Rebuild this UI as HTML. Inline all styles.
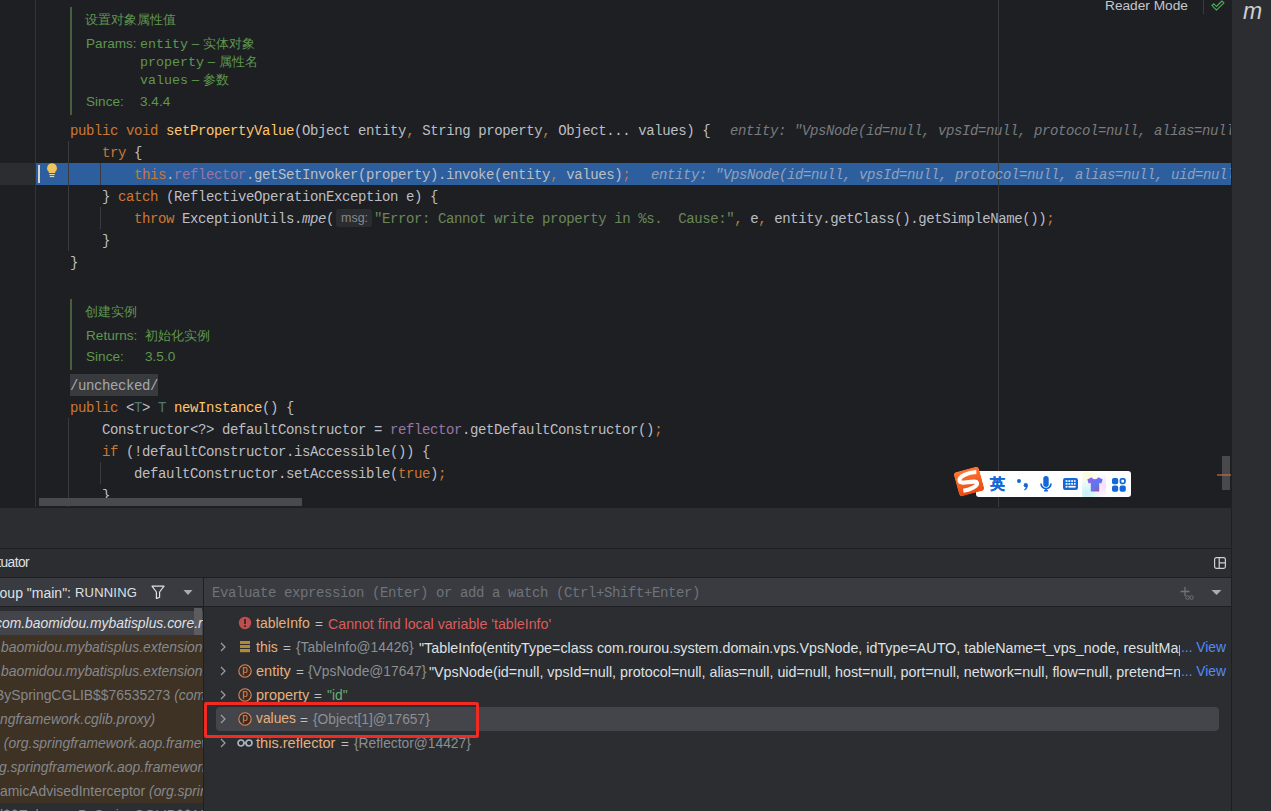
<!DOCTYPE html>
<html><head><meta charset="utf-8">
<style>
*{margin:0;padding:0;box-sizing:border-box}
html,body{width:1271px;height:811px;overflow:hidden;background:#2B2D30}
body{position:relative;font-family:"Liberation Sans",sans-serif}
.a{position:absolute}
#ed{left:0;top:0;width:1231px;height:508px;background:#1E1F22;overflow:hidden}
.ln{position:absolute;left:70px;height:22px;line-height:22px;white-space:pre;font-family:"Liberation Mono",monospace;font-size:14px;letter-spacing:-0.4px;color:#BCBEC4}
.k{color:#CC7832}.m{color:#FFC66D}.f{color:#9876AA}.s{color:#6A8759}.tp{color:#507874}.it{font-style:italic}
.hint{position:absolute;height:22px;line-height:22px;white-space:pre;font-family:"Liberation Mono",monospace;font-size:14px;letter-spacing:-0.4px;font-style:italic;color:#787B80}
.doc{position:absolute;white-space:pre;color:#5F9650;font-size:13.6px;line-height:18px;font-family:"Liberation Sans",sans-serif}
.docm{font-family:"Liberation Mono",monospace;font-size:13.333px}
.cj{font-size:12.6px}
.ui{position:absolute;white-space:pre;font-size:13.6px;line-height:24px;font-family:"Liberation Sans",sans-serif}
.vn{color:#E5B07F;font-size:13.8px}.eq{color:#BEC1C6;font-size:13.4px}.vt{color:#8C8F94;font-size:13.8px}.vs{color:#DFE1E5;font-size:14.3px;overflow:hidden}
</style></head><body>
<div id="ed" class="a">
  <!-- gutter -->
  <div class="a" style="left:35px;top:0;width:1px;height:507px;background:#313438"></div>
  <div class="a" style="left:0;top:163px;width:35px;height:22px;background:#2B2D30"></div>
  <!-- exec line -->
  <div class="a" style="left:36px;top:163px;width:1196px;height:22px;background:#2D5F9E"></div>
  <div class="a" style="left:38px;top:165px;width:2px;height:18px;background:#D8D4CC"></div>
  <svg class="a" style="left:46px;top:162px" width="12" height="16" viewBox="0 0 12 16">
    <path d="M6 1.2a4.9 4.9 0 0 0-3.2 8.6V11h6.4V9.8A4.9 4.9 0 0 0 6 1.2z" fill="#F2C55C"/>
    <rect x="3.3" y="12" width="5.4" height="1.1" fill="#D8D4CC"/>
    <rect x="3.8" y="14" width="4.4" height="1.1" fill="#D8D4CC"/>
  </svg>
  <!-- right margin -->
  <div class="a" style="left:998px;top:0;width:1px;height:507px;background:#393B40"></div>
  <!-- indent guides -->
  <div class="a" style="left:68px;top:141px;width:1px;height:110px;background:#393B40"></div>
  <div class="a" style="left:100px;top:163px;width:1px;height:22px;background:#393B40"></div>
  <div class="a" style="left:100px;top:207px;width:1px;height:22px;background:#393B40"></div>
  <div class="a" style="left:68px;top:418px;width:1px;height:89px;background:#393B40"></div>
  <div class="a" style="left:100px;top:462px;width:1px;height:22px;background:#393B40"></div>

  <!-- doc 1 -->
  <div class="a" style="left:70px;top:7px;width:2px;height:108px;background:#46603F"></div>
  <div class="doc" style="left:85px;top:11px"><span class="cj">设置对象属性值</span></div>
  <div class="doc" style="left:86px;top:35px">Params:</div>
  <div class="doc docm" style="left:140px;top:35px">entity<span style="font-family:'Liberation Sans'"> – <span class="cj">实体对象</span></span></div>
  <div class="doc docm" style="left:140px;top:53px">property<span style="font-family:'Liberation Sans'"> – <span class="cj">属性名</span></span></div>
  <div class="doc docm" style="left:140px;top:71px">values<span style="font-family:'Liberation Sans'"> – <span class="cj">参数</span></span></div>
  <div class="doc" style="left:86px;top:93px">Since:</div>
  <div class="doc" style="left:140px;top:93px">3.4.4</div>

  <!-- code 1 -->
  <div class="ln" style="top:120px"><span class="k">public</span> <span class="k">void</span> <span class="m">setPropertyValue</span>(Object entity<span class="k">,</span> String property<span class="k">,</span> Object... values) {</div>
  <div class="hint" style="left:730px;top:120px">entity: "VpsNode(id=null, vpsId=null, protocol=null, alias=null, uid=null</div>
  <div class="ln" style="top:142px">    <span class="k">try</span> {</div>
  <div class="ln" style="top:164px">        <span class="k">this</span>.<span class="f">reflector</span>.getSetInvoker(property).invoke(entity<span class="k">,</span> values)<span class="k">;</span></div>
  <div class="hint" style="left:651px;top:164px;color:#8FA3BF">entity: "VpsNode(id=null, vpsId=null, protocol=null, alias=null, uid=null, host=null</div>
  <div class="ln" style="top:186px">    } <span class="k">catch</span> (ReflectiveOperationException e) {</div>
  <div class="ln" style="top:208px">        <span class="k">throw</span> ExceptionUtils.<span class="it">mpe</span>(     <span class="s">"Error: Cannot write property in %s.  Cause:"</span><span class="k">,</span> e<span class="k">,</span> entity.getClass().getSimpleName())<span class="k">;</span></div>
  <div class="a" style="left:336px;top:209px;width:36px;height:18px;border-radius:3px;background:#2B2C30"></div>
  <div class="a" style="left:341px;top:209px;height:18px;line-height:18px;font-size:12.5px;color:#85888D;white-space:pre">msg:</div>
  <div class="ln" style="top:230px">    }</div>
  <div class="ln" style="top:252px">}</div>

  <!-- doc 2 -->
  <div class="a" style="left:70px;top:299px;width:2px;height:71px;background:#46603F"></div>
  <div class="doc" style="left:85px;top:303px"><span class="cj">创建实例</span></div>
  <div class="doc" style="left:86px;top:327px">Returns:</div>
  <div class="doc" style="left:145px;top:327px"><span class="cj">初始化实例</span></div>
  <div class="doc" style="left:86px;top:348px">Since:</div>
  <div class="doc" style="left:145px;top:348px">3.5.0</div>

  <!-- code 2 -->
  <div class="a" style="left:70px;top:374px;width:88px;height:22px;background:#393A3D"></div>
  <div class="ln" style="top:375px;color:#A4A9B0">/unchecked/</div>
  <div class="ln" style="top:397px"><span class="k">public</span> &lt;<span class="tp">T</span>&gt; <span class="tp">T</span> <span class="m">newInstance</span>() {</div>
  <div class="ln" style="top:419px">    Constructor&lt;?&gt; defaultConstructor = <span class="f">reflector</span>.getDefaultConstructor()<span class="k">;</span></div>
  <div class="ln" style="top:441px">    <span class="k">if</span> (!defaultConstructor.isAccessible()) {</div>
  <div class="ln" style="top:463px">        defaultConstructor.setAccessible(<span class="k">true</span>)<span class="k">;</span></div>
  <div class="ln" style="top:485px">    }</div>

  <!-- scrollbars -->
  <div class="a" style="left:39px;top:498px;width:263px;height:8px;background:#4A4A4C"></div>
  <div class="a" style="left:1222px;top:456px;width:8px;height:34px;background:#48494C"></div>
  <div class="a" style="left:1217px;top:474px;width:14px;height:2px;background:rgba(200,110,70,0.6)"></div>

  <!-- reader mode -->
  <div class="ui" style="left:1105px;top:-5px;color:#C4C7CD;line-height:22px;font-size:13.7px">Reader Mode</div>
  <div class="a" style="left:1203px;top:0;width:1px;height:14px;background:#393B40"></div>
  <svg class="a" style="left:1211px;top:0" width="14" height="12" viewBox="0 0 14 12">
    <path d="M0.9 5.4L5.4 10.2L13 2.9L10.9 1L5.4 6.5L2.9 3.8Z" fill="none" stroke="#55A85B" stroke-width="1.1" stroke-linejoin="round"/>
  </svg>
</div>

<!-- right strip -->
<div class="a" style="left:1231px;top:0;width:1px;height:811px;background:#1E1F22"></div>
<div class="a" style="left:1243px;top:-4px;font-size:23px;font-style:italic;color:#CDCFD3;line-height:30px">m</div>

<!-- IME bar -->
<div class="a" style="left:976px;top:471px;width:155px;height:26px;border-radius:3px;background:#FFFFFF"></div>
<svg class="a" style="left:956px;top:469px;transform:rotate(-15deg)" width="26" height="25" viewBox="0 0 26 25">
  <defs><linearGradient id="og" x1="0" y1="0" x2="0" y2="1"><stop offset="0" stop-color="#FF7634"/><stop offset="1" stop-color="#EA4A12"/></linearGradient></defs>
  <rect x="0" y="0" width="26" height="25" rx="3.5" fill="url(#og)"/>
  <path d="M22.5 5.2C15 3.6 4 4.5 4 9.6c0 4.2 16.3 2.6 16.3 6.4c0 3.6-9.5 4.6-15.2 4" fill="none" stroke="#FFFFFF" stroke-width="4.2"/>
</svg>
<div class="a" style="left:990px;top:474px;font-size:15px;font-weight:bold;color:#1268D6;line-height:20px;-webkit-text-stroke:0.3px #1268D6">英</div>
<svg class="a" style="left:1016px;top:477px" width="13" height="15" viewBox="0 0 13 15">
  <circle cx="3" cy="4" r="2" fill="#1268D6"/>
  <circle cx="9.8" cy="8.2" r="2.1" fill="#1268D6"/><path d="M11.8 8.4C11.6 11 10.5 12.6 8.6 13.6L8 12.8C9.2 11.9 9.8 10.8 9.9 9.5Z" fill="#1268D6"/>
</svg>
<svg class="a" style="left:1040px;top:476px" width="12" height="16" viewBox="0 0 12 16">
  <rect x="3.3" y="0" width="5.4" height="11" rx="2.7" fill="#1268D6"/>
  <path d="M1 7.6a5 5 0 0 0 10 0" fill="none" stroke="#1268D6" stroke-width="1.7"/>
  <rect x="5.2" y="12.4" width="1.6" height="1.6" fill="#1268D6"/><rect x="4" y="14" width="4" height="1.6" rx="0.5" fill="#1268D6"/>
</svg>
<svg class="a" style="left:1063px;top:478px" width="15" height="12" viewBox="0 0 15 12">
  <rect x="0" y="0" width="15" height="12" rx="2.2" fill="#1268D6"/>
  <g fill="#FFFFFF"><rect x="2.6" y="2.2" width="1.9" height="1.7"/><rect x="5.4" y="2.2" width="1.9" height="1.7"/><rect x="8.2" y="2.2" width="1.9" height="1.7"/><rect x="11" y="2.2" width="1.6" height="1.7"/>
  <rect x="2.6" y="5" width="1.9" height="1.7"/><rect x="5.4" y="5" width="1.9" height="1.7"/><rect x="8.2" y="5" width="1.9" height="1.7"/><rect x="11" y="5" width="1.6" height="1.7"/>
  <rect x="2.6" y="7.9" width="1.9" height="1.7"/><rect x="5.4" y="7.9" width="7.2" height="1.7"/></g>
</svg>
<div class="a" style="left:1082px;top:472px;width:24px;height:25px;background:radial-gradient(circle at 20% 85%,rgba(190,240,245,0.9),rgba(255,255,255,0) 55%),radial-gradient(circle at 90% 55%,rgba(248,215,250,0.9),rgba(255,255,255,0) 50%),radial-gradient(circle at 25% 15%,rgba(250,250,205,0.8),rgba(255,255,255,0) 40%)"></div>
<svg class="a" style="left:1087px;top:477px" width="16" height="15" viewBox="0 0 16 15">
  <defs><linearGradient id="sg" x1="0" y1="0" x2="1" y2="1"><stop offset="0" stop-color="#A05AF2"/><stop offset="0.55" stop-color="#5A78F0"/><stop offset="1" stop-color="#B0507A"/></linearGradient></defs>
  <path d="M4.6 0.3L0.3 2.6l1.4 4 2.1-.6v8.5h8.4V6l2.1.6 1.4-4L11.4.3C10.7 1.6 9.5 2.3 8 2.3S5.3 1.6 4.6.3z" fill="url(#sg)"/>
</svg>
<svg class="a" style="left:1112px;top:478px" width="14" height="14" viewBox="0 0 14 14">
  <g fill="#1268D6"><rect x="0" y="0" width="6.2" height="6.2" rx="1.8"/><rect x="0" y="7.6" width="6.2" height="6.2" rx="1.8"/><rect x="7.6" y="7.6" width="6.2" height="6.2" rx="1.8"/></g>
  <rect x="8.5" y="0.9" width="4.4" height="4.4" rx="1.2" fill="none" stroke="#1268D6" stroke-width="1.8"/>
</svg>

<!-- debug panel -->
<div class="a" style="left:0;top:548px;width:1231px;height:1px;background:#1E1F22"></div>
<div class="ui" style="left:-100px;width:129px;text-align:right;top:551px;color:#DFE1E5;font-size:13.8px;letter-spacing:-0.6px">tuator</div>
<svg class="a" style="left:1214px;top:557px" width="12" height="12" viewBox="0 0 12 12">
  <rect x="0.6" y="0.6" width="10.8" height="10.8" rx="1.8" fill="none" stroke="#CED0D6" stroke-width="1.2"/>
  <path d="M5.2 1v10M5.2 5.9h6" stroke="#CED0D6" stroke-width="1.2"/>
</svg>
<div class="a" style="left:0;top:577px;width:1231px;height:1px;background:#1E1F22"></div>
<div class="a" style="left:0;top:578px;width:1231px;height:28px;background:#393B40"></div>
<div class="a" style="left:0;top:606px;width:1231px;height:1px;background:#1E1F22"></div>
<div class="a" style="left:203px;top:578px;width:1px;height:233px;background:#1E1F22"></div>
<div class="ui" style="left:-100px;width:171px;text-align:right;top:581px;color:#DFE1E5;font-size:14px">oup "main":</div><div class="ui" style="left:75px;top:581px;color:#DFE1E5;font-size:13px;letter-spacing:0.2px">RUNNING</div>
<svg class="a" style="left:151px;top:585px" width="14" height="14" viewBox="0 0 14 14">
  <path d="M1 1.2h12L8.6 7v5.2L5.4 13.6V7z" fill="none" stroke="#DFE1E5" stroke-width="1.2" stroke-linejoin="round"/>
</svg>
<svg class="a" style="left:183px;top:589px" width="10" height="7" viewBox="0 0 10 7"><path d="M0.5 1h9L5 6z" fill="#A8ABB0"/></svg>
<div class="ln" style="left:212px;top:582px;color:#6F737A">Evaluate expression (Enter) or add a watch (Ctrl+Shift+Enter)</div>
<svg class="a" style="left:1180px;top:586px" width="15" height="14" viewBox="0 0 15 14">
  <path d="M5 1v9M0.5 5.5h9" stroke="#6F737A" stroke-width="1.3"/>
  <circle cx="7.5" cy="11.5" r="1.8" fill="none" stroke="#6F737A" stroke-width="1"/><circle cx="11.5" cy="11.5" r="1.8" fill="none" stroke="#6F737A" stroke-width="1"/>
</svg>
<svg class="a" style="left:1211px;top:589px" width="11" height="7" viewBox="0 0 11 7"><path d="M0.5 1h10L5.5 6z" fill="#A8ABB0"/></svg>

<!-- frames -->
<div class="a" style="left:0;top:607px;width:203px;height:204px;overflow:hidden;font-size:13.9px">
  <div class="a" style="left:0;top:4px;width:203px;height:24px;background:#43454A"></div>
  <div class="a" style="left:0;top:28px;width:203px;height:168px;background:#3D3224"></div>
  <div class="a" style="left:194px;top:1px;width:8px;height:27px;background:#5A5C60"></div>
  <div class="ui it" style="left:-5px;top:4px;color:#DFE1E5;font-size:13.9px">com.baomidou.mybatisplus.core.reflection</div>
  <div class="ui it" style="left:1px;top:28px;color:#86888C;font-size:13.9px">baomidou.mybatisplus.extension</div>
  <div class="ui it" style="left:1px;top:52px;color:#86888C;font-size:13.9px">baomidou.mybatisplus.extension</div>
  <div class="ui" style="left:-5px;top:76px;color:#86888C;font-size:13.9px">BySpringCGLIB$$76535273 <i>(com.baomidou</i></div>
  <div class="ui it" style="left:0px;top:100px;color:#86888C;font-size:13.9px">ngframework.cglib.proxy)</div>
  <div class="ui it" style="left:0px;top:124px;color:#86888C;font-size:13.9px"> (org.springframework.aop.framework</div>
  <div class="ui it" style="left:-1px;top:148px;color:#86888C;font-size:13.9px">g.springframework.aop.framework</div>
  <div class="ui" style="left:0px;top:172px;color:#86888C;font-size:13.9px">amicAdvisedInterceptor <i>(org.springframework</i></div>
  <div class="ui" style="left:0px;top:196px;color:#86888C;font-size:13.9px">l$$EnhancerBySpringCGLIB$$13a5</div>
</div>

<!-- variables -->
<div class="a" style="left:216px;top:707px;width:1003px;height:24px;border-radius:4px;background:#43454A"></div>
<svg class="a" style="left:238px;top:616px" width="14" height="14" viewBox="0 0 14 14">
  <circle cx="7" cy="7" r="6.2" fill="#BF4E4E"/><rect x="6.1" y="3" width="1.8" height="5" fill="#2B2D30"/><rect x="6.1" y="9.2" width="1.8" height="1.8" fill="#2B2D30"/>
</svg>
<div class="ui vn" style="left:256px;top:611px;font-size:14px">tableInfo</div>
<div class="ui eq" style="left:315px;top:612px">=</div>
<div class="ui" style="left:328px;top:612px;color:#DB5C5C;font-size:14.2px">Cannot find local variable 'tableInfo'</div>

<svg class="a" style="left:219px;top:642px" width="8" height="10" viewBox="0 0 8 10"><path d="M2 1l4 4-4 4" fill="none" stroke="#9DA0A8" stroke-width="1.2"/></svg>
<svg class="a" style="left:240px;top:641px" width="11" height="12" viewBox="0 0 11 12"><g fill="#B08A34"><rect x="0" y="0" width="10" height="3"/><rect x="0" y="4" width="10" height="3"/><rect x="0" y="8" width="10" height="3.2"/></g></svg>
<div class="ui vn" style="left:256px;top:635px;font-size:14px">this</div>
<div class="ui eq" style="left:283px;top:636px">=</div>
<div class="ui vt" style="left:296px;top:636px">{TableInfo@14426}</div>
<div class="ui vs" style="left:419px;top:636px;width:761px">"TableInfo(entityType=class com.rourou.system.domain.vps.VpsNode, idType=AUTO, tableName=t_vps_node, resultMap=null, keyProperty=null</div>
<div class="ui" style="left:1181px;top:636px;color:#548AF7;font-size:13.8px">... View</div>

<svg class="a" style="left:219px;top:666px" width="8" height="10" viewBox="0 0 8 10"><path d="M2 1l4 4-4 4" fill="none" stroke="#9DA0A8" stroke-width="1.2"/></svg>
<svg class="a" style="left:238px;top:664px" width="14" height="14" viewBox="0 0 14 14"><circle cx="7" cy="7" r="6.2" fill="#3D2B21" stroke="#DE8A5A" stroke-width="1.1"/><text x="7.1" y="9.3" font-size="10" text-anchor="middle" fill="#DE8A5A" font-family="Liberation Sans">p</text></svg>
<div class="ui vn" style="left:256px;top:659px;font-size:14.5px">entity</div>
<div class="ui eq" style="left:296px;top:660px">=</div>
<div class="ui vt" style="left:308px;top:660px">{VpsNode@17647}</div>
<div class="ui vs" style="left:429px;top:660px;width:751px">"VpsNode(id=null, vpsId=null, protocol=null, alias=null, uid=null, host=null, port=null, network=null, flow=null, pretend=null, status=null</div>
<div class="ui" style="left:1181px;top:660px;color:#548AF7;font-size:13.8px">... View</div>

<svg class="a" style="left:219px;top:690px" width="8" height="10" viewBox="0 0 8 10"><path d="M2 1l4 4-4 4" fill="none" stroke="#9DA0A8" stroke-width="1.2"/></svg>
<svg class="a" style="left:238px;top:688px" width="14" height="14" viewBox="0 0 14 14"><circle cx="7" cy="7" r="6.2" fill="#3D2B21" stroke="#DE8A5A" stroke-width="1.1"/><text x="7.1" y="9.3" font-size="10" text-anchor="middle" fill="#DE8A5A" font-family="Liberation Sans">p</text></svg>
<div class="ui vn" style="left:256px;top:683px;font-size:14.5px">property</div>
<div class="ui eq" style="left:314px;top:684px">=</div>
<div class="ui" style="left:327px;top:684px;color:#6AAB73;font-size:13.8px">"id"</div>

<svg class="a" style="left:219px;top:714px" width="8" height="10" viewBox="0 0 8 10"><path d="M2 1l4 4-4 4" fill="none" stroke="#9DA0A8" stroke-width="1.2"/></svg>
<svg class="a" style="left:238px;top:712px" width="14" height="14" viewBox="0 0 14 14"><circle cx="7" cy="7" r="6.2" fill="#3D2B21" stroke="#DE8A5A" stroke-width="1.1"/><text x="7.1" y="9.3" font-size="10" text-anchor="middle" fill="#DE8A5A" font-family="Liberation Sans">p</text></svg>
<div class="ui vn" style="left:256px;top:707px">values</div>
<div class="ui eq" style="left:300px;top:708px">=</div>
<div class="ui vt" style="left:313px;top:708px">{Object[1]@17657}</div>

<svg class="a" style="left:219px;top:738px" width="8" height="10" viewBox="0 0 8 10"><path d="M2 1l4 4-4 4" fill="none" stroke="#9DA0A8" stroke-width="1.2"/></svg>
<svg class="a" style="left:237px;top:739px" width="16" height="8" viewBox="0 0 16 8"><circle cx="4" cy="4" r="3" fill="none" stroke="#A9B4C0" stroke-width="1.7"/><circle cx="12" cy="4" r="3" fill="none" stroke="#A9B4C0" stroke-width="1.7"/><path d="M7 4h2" stroke="#A8ADB5" stroke-width="1.4"/></svg>
<div class="ui vn" style="left:256px;top:731px;font-size:14.6px">this.reflector</div>
<div class="ui eq" style="left:341px;top:732px">=</div>
<div class="ui vt" style="left:354px;top:732px">{Reflector@14427}</div>

<!-- red annotation -->
<div class="a" style="left:204px;top:702px;width:275px;height:36px;border:3px solid #F12A24;border-radius:2px"></div>
</body></html>
